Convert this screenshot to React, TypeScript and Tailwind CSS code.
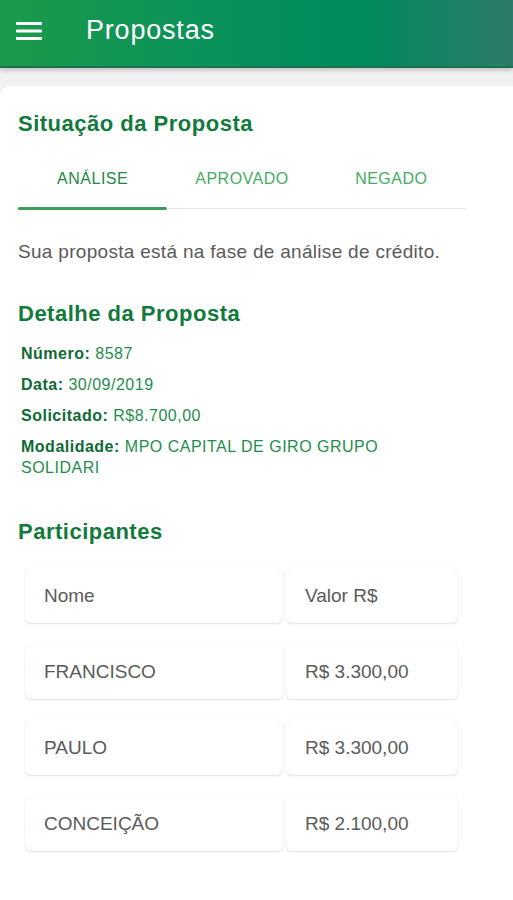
import React from 'react'

const tabs = ['ANÁLISE', 'APROVADO', 'NEGADO']

const details: Array<{ label: string, value: string }> = [
  { label: 'Número:', value: '8587' },
  { label: 'Data:', value: '30/09/2019' },
  { label: 'Solicitado:', value: 'R$8.700,00' },
  { label: 'Modalidade:', value: 'MPO CAPITAL DE GIRO GRUPO SOLIDARI' }
]

const rows: Array<[string, string]> = [
  ['Nome', 'Valor R$'],
  ['FRANCISCO', 'R$ 3.300,00'],
  ['PAULO', 'R$ 3.300,00'],
  ['CONCEIÇÃO', 'R$ 2.100,00']
]

function Cell ({ children, width }: { children: React.ReactNode, width: string }): JSX.Element {
  return (
    <div className={`${width} flex h-[55px] items-center rounded-[6px] bg-white pl-[19px] text-[19px] leading-6 text-[#5a5a5a] shadow-[0_1px_2px_rgba(0,0,0,0.12),0_0_1px_rgba(0,0,0,0.10)]`}>
      {children}
    </div>
  )
}

export default function App (): JSX.Element {
  return (
    <div className="flex min-h-[900px] w-[513px] flex-col bg-[#f1f1f1] font-['Liberation_Sans',Arial,sans-serif]">
      {/* top bar */}
      <header className="relative z-10 flex h-[68px] shrink-0 items-start gap-[44px] border-b-2 border-[#1d6f4f] bg-[linear-gradient(90deg,#1b9a4b_0%,#0a925a_40%,#008a5d_70%,#2d7b6c_100%)] pl-[16px] pt-[14px] shadow-[0_2px_5px_rgba(0,0,0,0.22)]">
        <svg width="26" height="18" viewBox="0 0 26 18" className="mt-[8px]" fill="#ffffff">
          <rect x="0" y="0" width="26" height="3" rx="1" />
          <rect x="0" y="7.5" width="26" height="3" rx="1" />
          <rect x="0" y="15" width="26" height="3" rx="1" />
        </svg>
        <h1 className="text-[27px] leading-8 tracking-[0.8px] text-white">Propostas</h1>
      </header>

      <main className="mt-[18px] flex-1 rounded-tl-[10px] bg-white px-[18px] pb-[40px] pt-[24px]">
        <h2 className="text-[22px] font-bold leading-7 tracking-[0.5px] text-[#127a3b]">Situação da Proposta</h2>

        <div className="mt-[13px] grid w-[448px] grid-cols-3">
          {tabs.map((tab, index) => (
            <div key={tab} className="flex flex-col">
              <div className={`pb-[18px] pt-[18px] text-center text-[16px] leading-5 tracking-[0.5px] ${index === 0 ? 'text-[#1c8a44]' : 'text-[#45ac62]'}`}>
                {tab}
              </div>
              {index === 0
                ? <div className="h-[3px] rounded-full bg-[#3b9e58]" />
                : <div className="flex h-[3px] items-center"><div className="h-px w-full bg-[#e6e6e6]" /></div>}
            </div>
          ))}
        </div>

        <p className="mt-[30px] text-[19px] leading-6 tracking-[0.3px] text-[#5a5a5a]">Sua proposta está na fase de análise de crédito.</p>

        <h2 className="mt-[36px] text-[22px] font-bold leading-7 tracking-[0.5px] text-[#127a3b]">Detalhe da Proposta</h2>
        <ul className="mt-[15px] flex max-w-[400px] flex-col gap-[10px] pl-[3px] text-[16px] leading-[21px] tracking-[0.5px]">
          {details.map((item) => (
            <li key={item.label} className="text-[#1f8d4c]">
              <span className="font-bold text-[#0e6a34]">{item.label}</span> {item.value}
            </li>
          ))}
        </ul>

        <h2 className="mt-[40px] text-[22px] font-bold leading-7 tracking-[0.5px] text-[#127a3b]">Participantes</h2>
        <div className="ml-[7px] mt-[22px] flex flex-col gap-[21px]">
          {rows.map(([name, value]) => (
            <div key={name} className="flex gap-[3px]">
              <Cell width="w-[258px]">{name}</Cell>
              <Cell width="w-[172px]">{value}</Cell>
            </div>
          ))}
        </div>
      </main>
    </div>
  )
}
